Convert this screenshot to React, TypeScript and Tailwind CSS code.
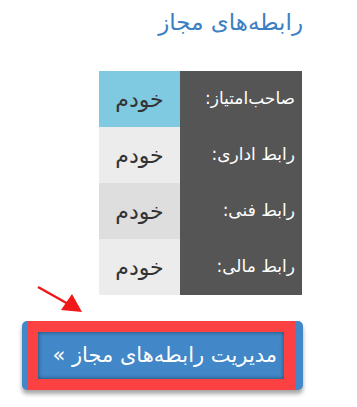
const rows = [
  { label: 'صاحب‌امتیاز:', value: 'خودم', bg: 'bg-[#7fc9e1]' },
  { label: 'رابط اداری:', value: 'خودم', bg: 'bg-[#ececec]' },
  { label: 'رابط فنی:', value: 'خودم', bg: 'bg-[#dedede]' },
  { label: 'رابط مالی:', value: 'خودم', bg: 'bg-[#ececec]' },
];

export default function App() {
  return (
    <div className="relative w-[357px] h-[407px] bg-white overflow-hidden" style={{ fontFamily: '"DejaVu Sans", sans-serif' }}>
      <div dir="rtl" className="ml-[22px] w-[281px] pt-[6px]">
        <h2 className="text-[23px] leading-[32px] text-[#3b80c3]">رابطه‌های مجاز</h2>

        {/* جدول رابط‌ها */}
        <div className="mt-[33px] mr-[1px] w-[203px]">
          {rows.map((r, i) => (
            <div key={i} className="flex h-[56px]">
              <div className="w-[122px] bg-[#555555] text-white text-[17px] flex items-center pr-[7px]">{r.label}</div>
              <div className={`w-[81px] ${r.bg} text-[#333] text-[22px] flex items-center justify-center`}>{r.value}</div>
            </div>
          ))}
        </div>

        <button className="mt-[26px] w-[281px] h-[69px] rounded-[5px] bg-[#4287c7] text-white text-[21px] flex items-center pr-[26px] shadow-[0_4px_4px_rgba(0,0,0,0.35)]">
          مدیریت رابطه‌های مجاز »
        </button>
      </div>

      {/* annotation: red frame */}
      <div className="absolute left-[27px] top-[321px] w-[268px] h-[69px] border-[11px] border-[#fb4141] shadow-[inset_0_0_4px_rgba(0,0,0,0.5)]" />

      {/* annotation: arrow */}
      <svg className="absolute left-0 top-0" width="357" height="407">
        <line x1="38" y1="287" x2="70" y2="305" stroke="#f01818" strokeWidth="2.5" />
        <polygon points="82,312 61,310 72,294" fill="#f01818" />
      </svg>
    </div>
  );
}
